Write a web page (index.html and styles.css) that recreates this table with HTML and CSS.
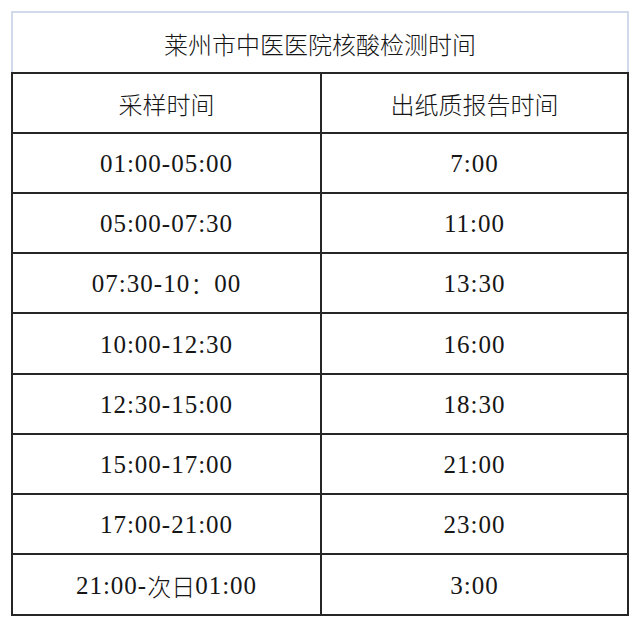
FILE: index.html
```html
<!DOCTYPE html>
<html lang="zh-CN">
<head>
<meta charset="utf-8">
<title>莱州市中医医院核酸检测时间</title>
<link rel="stylesheet" href="styles.css">
</head>
<body>
<div class="sheet">
  <div class="title">莱州市中医医院核酸检测时间</div>
  <div class="grid">
    <div class="cell head">采样时间</div>
    <div class="cell head">出纸质报告时间</div>
    <div class="cell">01:00-05:00</div>
    <div class="cell">7:00</div>
    <div class="cell">05:00-07:30</div>
    <div class="cell">11:00</div>
    <div class="cell">07:30-10<span class="cjk">：</span>00</div>
    <div class="cell">13:30</div>
    <div class="cell tall">10:00-12:30</div>
    <div class="cell tall">16:00</div>
    <div class="cell">12:30-15:00</div>
    <div class="cell">18:30</div>
    <div class="cell">15:00-17:00</div>
    <div class="cell">21:00</div>
    <div class="cell">17:00-21:00</div>
    <div class="cell">23:00</div>
    <div class="cell tall">21:00-<span class="cjk">次日</span>01:00</div>
    <div class="cell tall">3:00</div>
  </div>
</div>
</body>
</html>
```
FILE: styles.css
```css
html, body {
  margin: 0;
  padding: 0;
  background: #ffffff;
}

body {
  font-family: "Liberation Serif", "Noto Sans CJK SC", serif;
  font-size: 24px;
  color: #161616;
}

.sheet {
  margin: 11px 0 0 11px;
  width: 618px;
}

.title {
  height: 61px;
  box-sizing: border-box;
  padding-top: 1px;
  border: 2px solid #d3d9ea;
  border-bottom: none;
  display: flex;
  align-items: center;
  justify-content: center;
  font-family: "Noto Sans CJK SC", sans-serif;
  font-weight: 300;
}

.grid {
  display: grid;
  grid-template-columns: 307px 305px;
  gap: 2px;
  padding: 2px;
  background: #262626;
}

.cell {
  background: #ffffff;
  height: 58px;
  box-sizing: border-box;
  padding-top: 2px;
  display: flex;
  align-items: center;
  justify-content: center;
  font-size: 25px;
  letter-spacing: 1px;
  line-height: 30px;
}

.cell.tall {
  height: 59px;
}

.head {
  font-family: "Noto Sans CJK SC", sans-serif;
  font-weight: 300;
  font-size: 24px;
  letter-spacing: 0;
}

.cjk {
  font-family: "Noto Sans CJK SC", sans-serif;
  font-weight: 300;
  font-size: 24px;
  letter-spacing: 0;
  line-height: 0;
}
```
